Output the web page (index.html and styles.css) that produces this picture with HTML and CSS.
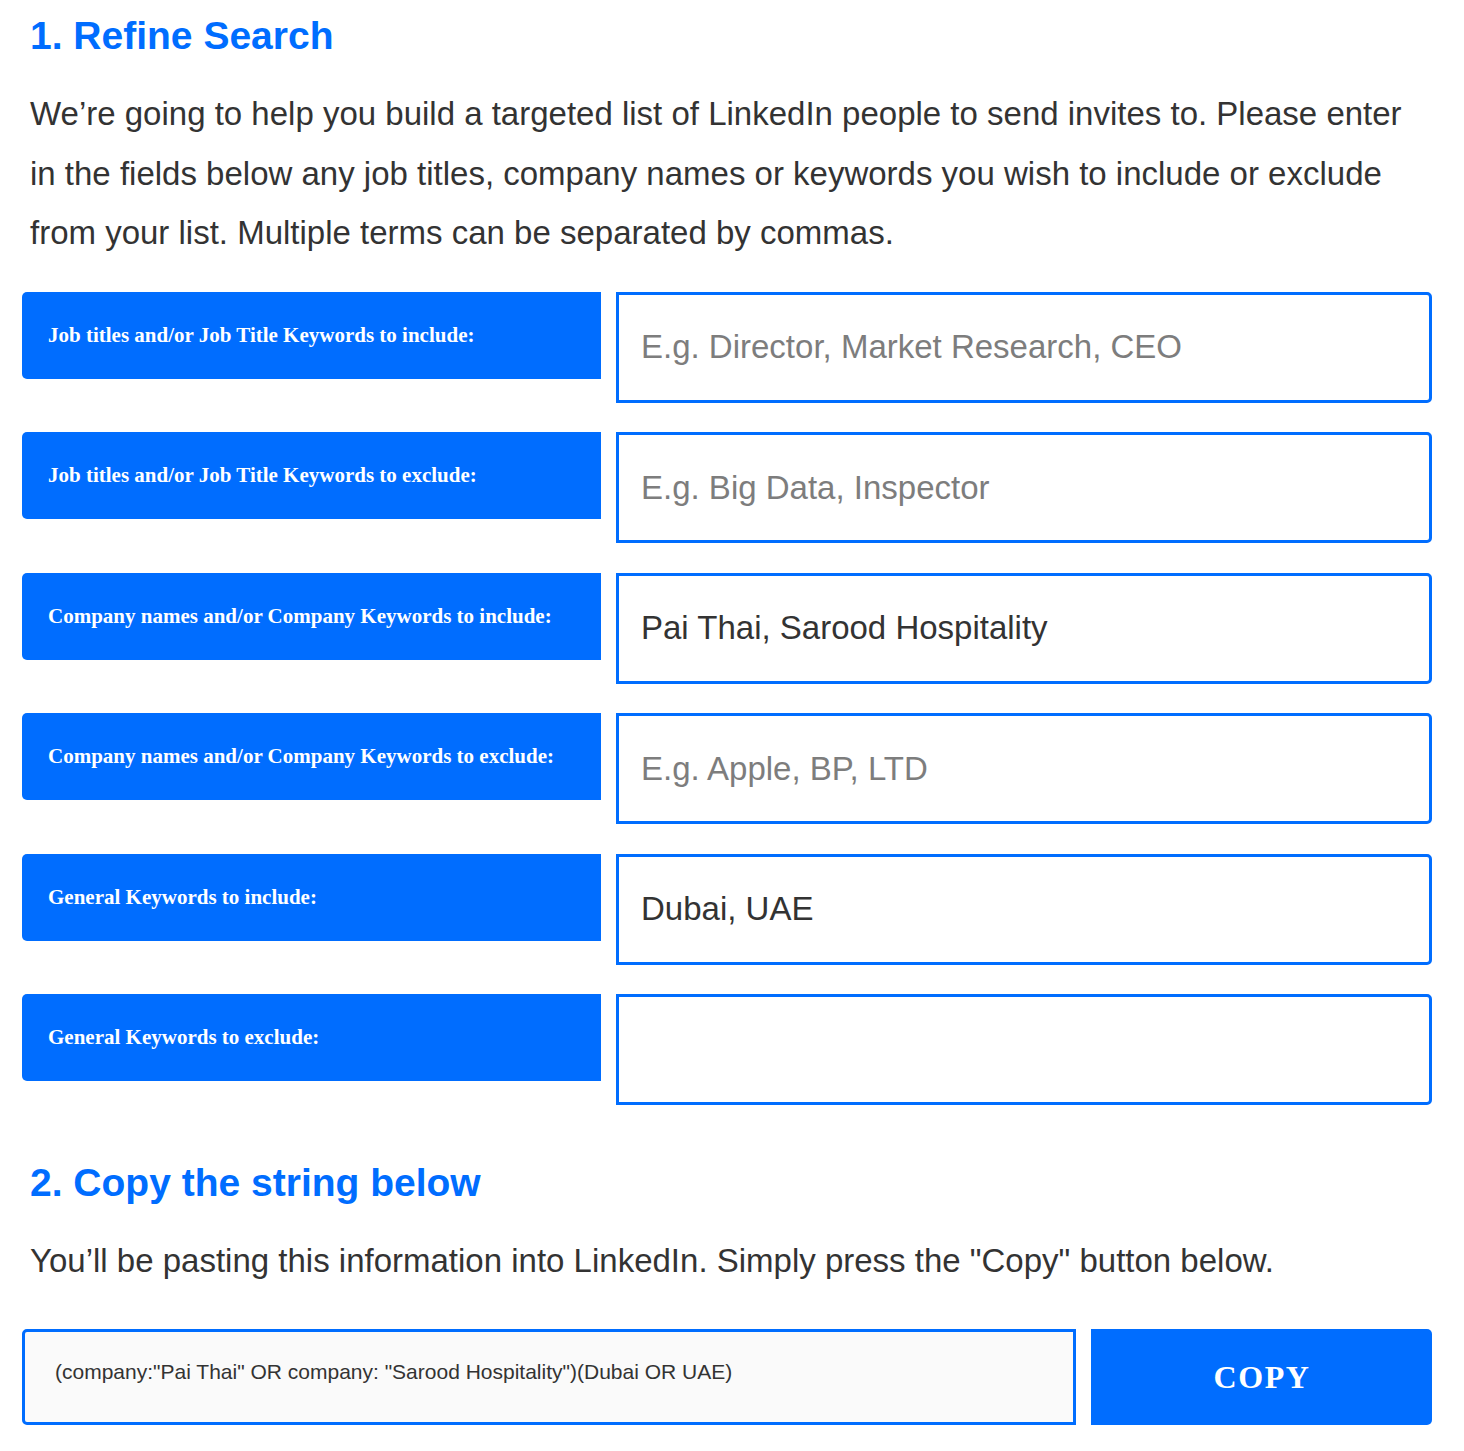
FILE: index.html
```html
<!DOCTYPE html>
<html lang="en">
<head>
<meta charset="utf-8">
<title>Refine Search</title>
<link rel="stylesheet" href="styles.css">
</head>
<body>
<main class="page">
  <h1 class="step-title">1. Refine Search</h1>
  <p class="step-text">We’re going to help you build a targeted list of LinkedIn people to send invites to. Please enter in the fields below any job titles, company names or keywords you wish to include or exclude from your list. Multiple terms can be separated by commas.</p>

  <div class="fields">
    <div class="field-row">
      <label class="field-label" for="f1">Job titles and/or Job Title Keywords to include:</label>
      <input class="field-input" id="f1" type="text" placeholder="E.g. Director, Market Research, CEO">
    </div>
    <div class="field-row">
      <label class="field-label" for="f2">Job titles and/or Job Title Keywords to exclude:</label>
      <input class="field-input" id="f2" type="text" placeholder="E.g. Big Data, Inspector">
    </div>
    <div class="field-row">
      <label class="field-label" for="f3">Company names and/or Company Keywords to include:</label>
      <input class="field-input" id="f3" type="text" value="Pai Thai, Sarood Hospitality">
    </div>
    <div class="field-row">
      <label class="field-label" for="f4">Company names and/or Company Keywords to exclude:</label>
      <input class="field-input" id="f4" type="text" placeholder="E.g. Apple, BP, LTD">
    </div>
    <div class="field-row">
      <label class="field-label" for="f5">General Keywords to include:</label>
      <input class="field-input" id="f5" type="text" value="Dubai, UAE">
    </div>
    <div class="field-row">
      <label class="field-label" for="f6">General Keywords to exclude:</label>
      <input class="field-input" id="f6" type="text">
    </div>
  </div>

  <h2 class="step-title step-two">2. Copy the string below</h2>
  <p class="step-text">You’ll be pasting this information into LinkedIn. Simply press the "Copy" button below.</p>

  <div class="copy-row">
    <div class="copy-string">(company:"Pai Thai" OR company: "Sarood Hospitality")(Dubai OR UAE)</div>
    <button class="copy-button" type="button">COPY</button>
  </div>
</main>
</body>
</html>
```

FILE: styles.css
```css
* {
  box-sizing: border-box;
}

html, body {
  margin: 0;
  padding: 0;
  background: #ffffff;
}

body {
  font-family: "Liberation Sans", Arial, sans-serif;
  color: #333333;
}

.page {
  width: 1410px;
  margin-left: 22px;
  padding-bottom: 27px;
}

.step-title {
  margin: 14px 0 0 8px;
  font-size: 39px;
  line-height: 1.15;
  font-weight: 700;
  color: #006dff;
}

.step-two {
  margin-top: 56px;
}

.step-text {
  margin: 25.2px 0 0 8px;
  font-size: 33px;
  line-height: 59.5px;
  color: #333333;
}

.fields {
  display: flex;
  flex-direction: column;
  gap: 29.5px;
  margin-top: 29.3px;
}

.field-row {
  display: grid;
  grid-template-columns: 579px 816px;
  column-gap: 15px;
  align-items: start;
}

.field-label {
  display: flex;
  align-items: center;
  height: 87px;
  padding: 0 20px 0 26px;
  background: #006dff;
  color: #ffffff;
  border-radius: 5px 0 0 5px;
  font-family: "Liberation Serif", "Times New Roman", serif;
  font-weight: 700;
  font-size: 21px;
}

.field-input {
  display: block;
  width: 816px;
  height: 111px;
  margin: 0;
  padding: 0 22px;
  border: 3px solid #006dff;
  border-radius: 0 5px 5px 0;
  background: #ffffff;
  font-family: "Liberation Sans", Arial, sans-serif;
  font-size: 33px;
  color: #333333;
  outline: none;
}

.field-input::placeholder {
  color: #7d7d7d;
  opacity: 1;
}

.copy-row {
  display: flex;
  gap: 15px;
  margin-top: 38.3px;
}

.copy-string {
  width: 1054px;
  height: 96px;
  padding: 28px 30px 0 30px;
  border: 3px solid #006dff;
  border-radius: 5px 0 0 5px;
  background: #fafafa;
  font-size: 21px;
  line-height: 23px;
  color: #333333;
}

.copy-button {
  width: 341px;
  height: 96px;
  margin: 0;
  padding: 0 0 0 1px;
  border: none;
  border-radius: 0 5px 5px 0;
  background: #006dff;
  color: #ffffff;
  font-family: "Liberation Serif", "Times New Roman", serif;
  font-weight: 700;
  font-size: 32px;
  letter-spacing: 1.6px;
  cursor: pointer;
}
```
